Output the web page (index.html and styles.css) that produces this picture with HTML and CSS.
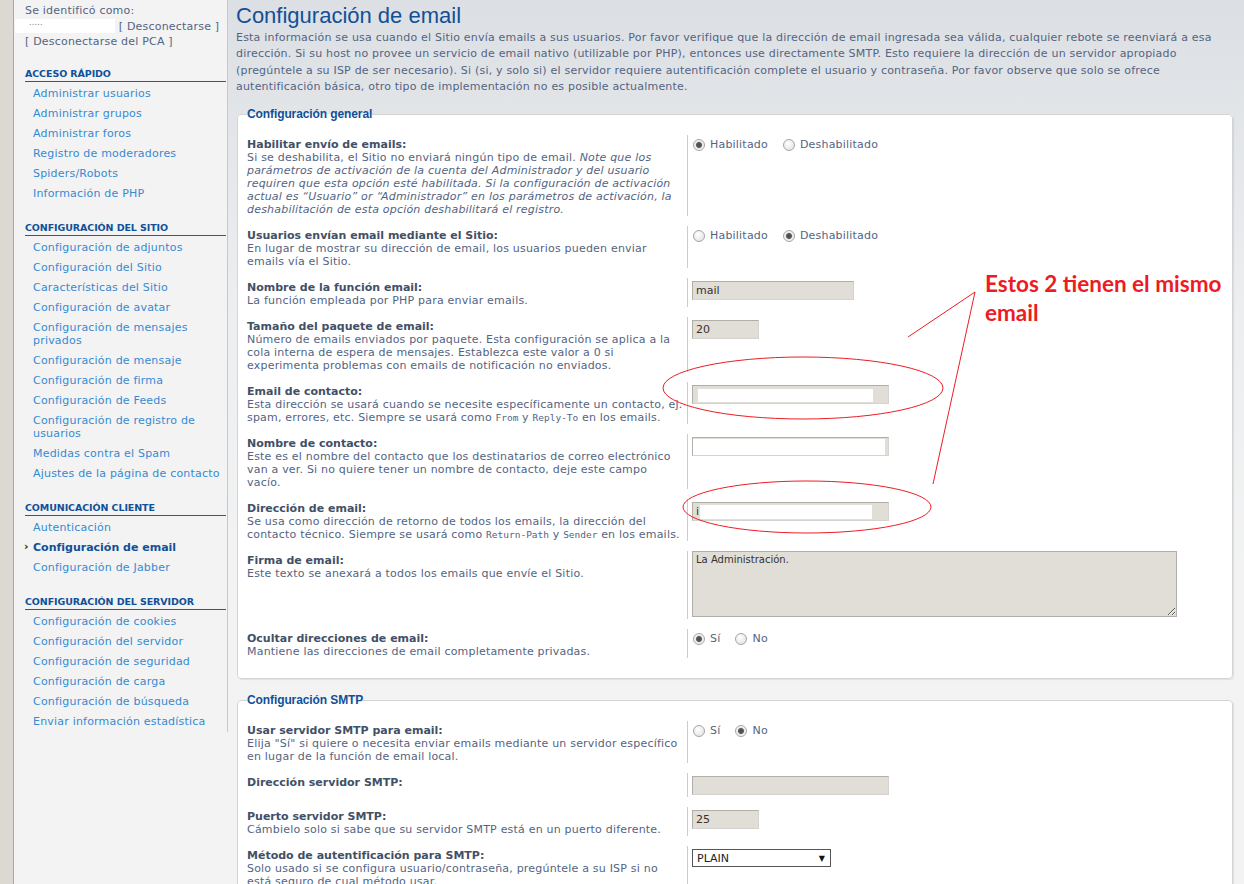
FILE: index.html
```html
<!DOCTYPE html>
<html lang="es">
	<head>
		<meta charset="UTF-8">
		<meta name="viewport" content="width=device-width, initial-scale=1.0">
		<title>Configuración de email</title>
		<link rel="stylesheet" href="styles.css">
	</head>
	<body>
		<div class="page">
			<div class="edge"></div>
			<div class="menu">
				<div class="who">
					<div>Se identificó como:</div>
					<div><span class="redact">.....</span> <a href="#">[ Desconectarse ]</a></div>
					<div><a href="#">[ Desconectarse del PCA ]</a></div>
				</div>

				<div class="block">
					<h3>Acceso rápido</h3>
					<ul>
						<li><a href="#">Administrar usuarios</a></li>
						<li><a href="#">Administrar grupos</a></li>
						<li><a href="#">Administrar foros</a></li>
						<li><a href="#">Registro de moderadores</a></li>
						<li><a href="#">Spiders/Robots</a></li>
						<li><a href="#">Información de PHP</a></li>
					</ul>
				</div>

				<div class="block">
					<h3>Configuración del Sitio</h3>
					<ul>
						<li><a href="#">Configuración de adjuntos</a></li>
						<li><a href="#">Configuración del Sitio</a></li>
						<li><a href="#">Características del Sitio</a></li>
						<li><a href="#">Configuración de avatar</a></li>
						<li><a href="#">Configuración de mensajes privados</a></li>
						<li><a href="#">Configuración de mensaje</a></li>
						<li><a href="#">Configuración de firma</a></li>
						<li><a href="#">Configuración de Feeds</a></li>
						<li><a href="#">Configuración de registro de usuarios</a></li>
						<li><a href="#">Medidas contra el Spam</a></li>
						<li><a href="#">Ajustes de la página de contacto</a></li>
					</ul>
				</div>

				<div class="block">
					<h3>Comunicación cliente</h3>
					<ul>
						<li><a href="#">Autenticación</a></li>
						<li class="active"><a href="#">Configuración de email</a></li>
						<li><a href="#">Configuración de Jabber</a></li>
					</ul>
				</div>

				<div class="block">
					<h3>Configuración del servidor</h3>
					<ul>
						<li><a href="#">Configuración de cookies</a></li>
						<li><a href="#">Configuración del servidor</a></li>
						<li><a href="#">Configuración de seguridad</a></li>
						<li><a href="#">Configuración de carga</a></li>
						<li><a href="#">Configuración de búsqueda</a></li>
						<li><a href="#">Enviar información estadística</a></li>
					</ul>
				</div>
			</div>

			<div class="main">
				<h1>Configuración de email</h1>
				<p class="intro">Esta información se usa cuando el Sitio envía emails a sus usuarios. Por favor verifique que la dirección de email ingresada sea válida, cualquier rebote se reenviará a esa dirección. Si su host no provee un servicio de email nativo (utilizable por PHP), entonces use directamente SMTP. Esto requiere la dirección de un servidor apropiado (pregúntele a su ISP de ser necesario). Si (si, y solo si) el servidor requiere autentificación complete el usuario y contraseña. Por favor observe que solo se ofrece autentificación básica, otro tipo de implementación no es posible actualmente.</p>

				<fieldset>
					<legend>Configuración general</legend>
					<dl class="row">
						<dt><b>Habilitar envío de emails:</b><span>Si se deshabilita, el Sitio no enviará ningún tipo de email. <i>Note que los parámetros de activación de la cuenta del Administrador y del usuario requiren que esta opción esté habilitada. Si la configuración de activación actual es “Usuario” or “Administrador” en los parámetros de activación, la deshabilitación de esta opción deshabilitará el registro.</i></span></dt>
						<dd><label class="opt"><input type="radio" name="r1" checked>Habilitado</label><label class="opt"><input type="radio" name="r1">Deshabilitado</label></dd>
					</dl>
					<dl class="row">
						<dt><b>Usuarios envían email mediante el Sitio:</b><span>En lugar de mostrar su dirección de email, los usuarios pueden enviar emails vía el Sitio.</span></dt>
						<dd><label class="opt"><input type="radio" name="r2">Habilitado</label><label class="opt"><input type="radio" name="r2" checked>Deshabilitado</label></dd>
					</dl>
					<dl class="row">
						<dt><b>Nombre de la función email:</b><span>La función empleada por PHP para enviar emails.</span></dt>
						<dd><input class="txt wide" type="text" value="mail"></dd>
					</dl>
					<dl class="row">
						<dt><b>Tamaño del paquete de email:</b><span>Número de emails enviados por paquete. Esta configuración se aplica a la cola interna de espera de mensajes. Establezca este valor a 0 si experimenta problemas con emails de notificación no enviados.</span></dt>
						<dd><input class="txt short" type="text" value="20"></dd>
					</dl>
					<dl class="row">
						<dt><b>Email de contacto:</b><span>Esta dirección se usará cuando se necesite específicamente un contacto, ej. spam, errores, etc. Siempre se usará como <code>From</code> y <code>Reply-To</code> en los emails.</span></dt>
						<dd><input class="txt mid hide1" type="text" value=""></dd>
					</dl>
					<dl class="row">
						<dt><b>Nombre de contacto:</b><span>Este es el nombre del contacto que los destinatarios de correo electrónico van a ver. Si no quiere tener un nombre de contacto, deje este campo<br>vacío.</span></dt>
						<dd><input class="txt mid hide2" type="text" value=""></dd>
					</dl>
					<dl class="row">
						<dt><b>Dirección de email:</b><span>Se usa como dirección de retorno de todos los emails, la dirección del contacto técnico. Siempre se usará como <code>Return-Path</code> y <code>Sender</code> en los emails.</span></dt>
						<dd><input class="txt mid hide3" type="text" value="i"></dd>
					</dl>
					<dl class="row">
						<dt><b>Firma de email:</b><span>Este texto se anexará a todos los emails que envíe el Sitio.</span></dt>
						<dd><textarea class="sig">La Administración.</textarea></dd>
					</dl>
					<dl class="row">
						<dt><b>Ocultar direcciones de email:</b><span>Mantiene las direcciones de email completamente privadas.</span></dt>
						<dd><label class="opt"><input type="radio" name="r3" checked>Sí</label><label class="opt"><input type="radio" name="r3">No</label></dd>
					</dl>
				</fieldset>

				<fieldset>
					<legend>Configuración SMTP</legend>
					<dl class="row">
						<dt><b>Usar servidor SMTP para email:</b><span>Elija "Sí" si quiere o necesita enviar emails mediante un servidor específico en lugar de la función de email local.</span></dt>
						<dd><label class="opt"><input type="radio" name="r4">Sí</label><label class="opt"><input type="radio" name="r4" checked>No</label></dd>
					</dl>
					<dl class="row">
						<dt><b>Dirección servidor SMTP:</b></dt>
						<dd><input class="txt mid" type="text" value=""></dd>
					</dl>
					<dl class="row">
						<dt><b>Puerto servidor SMTP:</b><span>Cámbielo solo si sabe que su servidor SMTP está en un puerto diferente.</span></dt>
						<dd><input class="txt short" type="text" value="25"></dd>
					</dl>
					<dl class="row">
						<dt><b>Método de autentificación para SMTP:</b><span>Solo usado si se configura usuario/contraseña, pregúntele a su ISP si no<br>está seguro de cual método usar.</span></dt>
						<dd><span class="sel"><select><option>PLAIN</option><option>LOGIN</option><option>CRAM-MD5</option></select></span></dd>
					</dl>
				</fieldset>
			</div>
		</div>

		<!--anotación en rojo encima de la página-->
		<svg class="marks" width="1244" height="884" viewBox="0 0 1244 884">
			<ellipse cx="803" cy="388" rx="140" ry="31"/>
			<ellipse cx="807" cy="507" rx="124" ry="26"/>
			<polyline points="908,337 975,292 933,484"/>
		</svg>
		<div class="note">Estos 2 tienen el mismo<br>email</div>
	</body>
</html>
```

FILE: styles.css
```css
body{
	margin:0;
	background:#f3f3f3;
	font-family:"DejaVu Sans",Verdana,sans-serif;
	font-size:11px;
	letter-spacing:0.2px;
	color:#536482;
	position:relative;
	overflow:hidden;
}

b,strong{
	letter-spacing:0;
}

a{
	color:#368ad2;
	text-decoration:none;
}

.page{
	display:flex;
	min-height:884px;
}

/*franja izquierda*/
.edge{
	width:13px;
	flex-shrink:0;
	background:#dcd9d3;
	border-right:1px solid #a9a9a9;
}

/*menu lateral*/
.menu{
	width:201px;
	flex-shrink:0;
	align-self:flex-start;
	padding:3px 1px 0 11px;
	background:#f3f3f3;
	border-right:1px solid #c8c8c8;
	min-height:727px;
}

.who{
	line-height:15.5px;
	color:#536482;
}

.who a{
	color:#536482;
}

.redact{
	display:inline-block;
	width:100px;
	height:14px;
	margin-left:-10px;
	vertical-align:top;
	background:#fff;
	color:#777;
	font-size:8px;
	line-height:8px;
	text-indent:14px;
}

.block{
	margin-top:17px;
}

.block h3{
	margin:0;
	padding-bottom:1px;
	font-size:9.5px;
	line-height:13px;
	letter-spacing:-0.1px;
	text-transform:uppercase;
	color:#115098;
	border-bottom:1px solid #1d5c9f;
}

.block ul{
	list-style:none;
	margin:2px 0 0;
	padding:0 0 0 8px;
}

.block li{
	padding:3px 0 4px;
	line-height:13px;
}

.block li.active{
	position:relative;
}

.block li.active a{
	font-weight:bold;
	letter-spacing:0;
	color:#115098;
}

.block li.active::before{
	content:"›";
	position:absolute;
	left:-9px;
	top:2px;
	font-weight:bold;
	color:#222;
}

/*contenido principal*/
.main{
	flex:1;
	padding:0 11px 0 8px;
	background:linear-gradient(#dcdfe3,#eceef0 300px,#f3f3f3 600px);
}

h1{
	margin:2px 0 0;
	font-family:"Liberation Sans",Arial,sans-serif;
	font-weight:normal;
	font-size:22px;
	line-height:28px;
	letter-spacing:0;
	color:#115098;
}

.intro{
	margin:0;
	line-height:16.3px;
	color:#536482;
}

fieldset{
	margin:12px 0 0 1px;
	padding:14px 0 20px 9px;
	background:#fff;
	border:1px solid #d4d4d4;
	border-radius:4px;
	box-shadow:1px 1px 1px rgba(0,0,0,0.08);
}

fieldset+fieldset{
	margin-top:14px;
}

legend{
	padding:0;
	margin-left:0;
	font-family:"Liberation Sans",Arial,sans-serif;
	font-weight:bold;
	font-size:12px;
	line-height:14px;
	letter-spacing:-0.1px;
	color:#115098;
}

.row{
	display:flex;
	margin:0 0 10px;
	line-height:13px;
}

.row:last-child{
	margin-bottom:0;
}

.row dt{
	width:440px;
	flex-shrink:0;
	padding-top:3px;
}

.row dt b{
	display:block;
	color:#425067;
}

.row dt span{
	display:block;
	color:#536482;
}

.row dd{
	flex:1;
	margin:0;
	padding:3px 0 2px 4px;
	border-left:1px solid #cccccc;
}

code{
	font-family:"DejaVu Sans Mono",monospace;
	font-size:9.5px;
	letter-spacing:0;
}

/*opciones de radio*/
.opt{
	display:inline-flex;
	align-items:center;
	margin-right:14px;
	color:#536482;
}

.opt input{
	appearance:none;
	margin:0 5px 0 1px;
	width:12px;
	height:12px;
	border:1px solid #a5a5a5;
	border-radius:50%;
	background:radial-gradient(circle at 40% 35%,#ffffff,#dedede);
}

.opt input:checked{
	background:radial-gradient(circle,#4a4a4a 0,#5a5a5a 2.5px,#e8e8e8 3.5px,#ffffff 6px);
}

/*campos de texto*/
.txt{
	box-sizing:border-box;
	height:19px;
	padding:0 3px;
	border:1px solid #b1aea8;
	border-right-color:#d6d3ce;
	border-bottom-color:#d6d3ce;
	background:#e1ddd7;
	font-family:"DejaVu Sans",Verdana,sans-serif;
	font-size:11px;
	color:#333;
	outline:none;
}

.wide{width:162px;}
.short{width:67px;}
.mid{width:197px;}

/*partes tapadas con blanco*/
.hide1{
	background:linear-gradient(#fff,#fff) no-repeat 5px 3px/175px 13px,#e1ddd7;
}
.hide2{
	background:linear-gradient(#fff,#fff) no-repeat 0 1px/192px 16px,#e1ddd7;
}
.hide3{
	background:linear-gradient(#fff,#fff) no-repeat 7px 2px/172px 14px,#e1ddd7;
}

.sig{
	box-sizing:border-box;
	width:485px;
	height:66px;
	margin:-3px 0 0;
	padding:2px 3px;
	border:1px solid #b1aea8;
	background:#e1ddd7;
	font-family:"DejaVu Sans",Verdana,sans-serif;
	font-size:10px;
	color:#333;
	resize:both;
	display:block;
}

.sel{
	position:relative;
	display:inline-block;
}

.sel select{
	appearance:none;
	width:139px;
	height:18px;
	padding:0 4px;
	border:1px solid #555;
	background:#fff;
	font-family:"DejaVu Sans",Verdana,sans-serif;
	font-size:11px;
	color:#222;
	border-radius:0;
}

.sel::after{
	content:"▼";
	position:absolute;
	right:6px;
	top:3px;
	font-size:8px;
	color:#111;
	pointer-events:none;
}

/*anotación*/
.marks{
	position:absolute;
	left:0;
	top:0;
	pointer-events:none;
}

.marks ellipse,.marks polyline{
	fill:none;
	stroke:#ed1c24;
	stroke-width:1;
}

.note{
	position:absolute;
	left:985px;
	top:269px;
	font-family:"Lato","Liberation Sans",sans-serif;
	font-weight:bold;
	font-size:22.5px;
	line-height:29px;
	color:#ed1c24;
	letter-spacing:0;
}
```
